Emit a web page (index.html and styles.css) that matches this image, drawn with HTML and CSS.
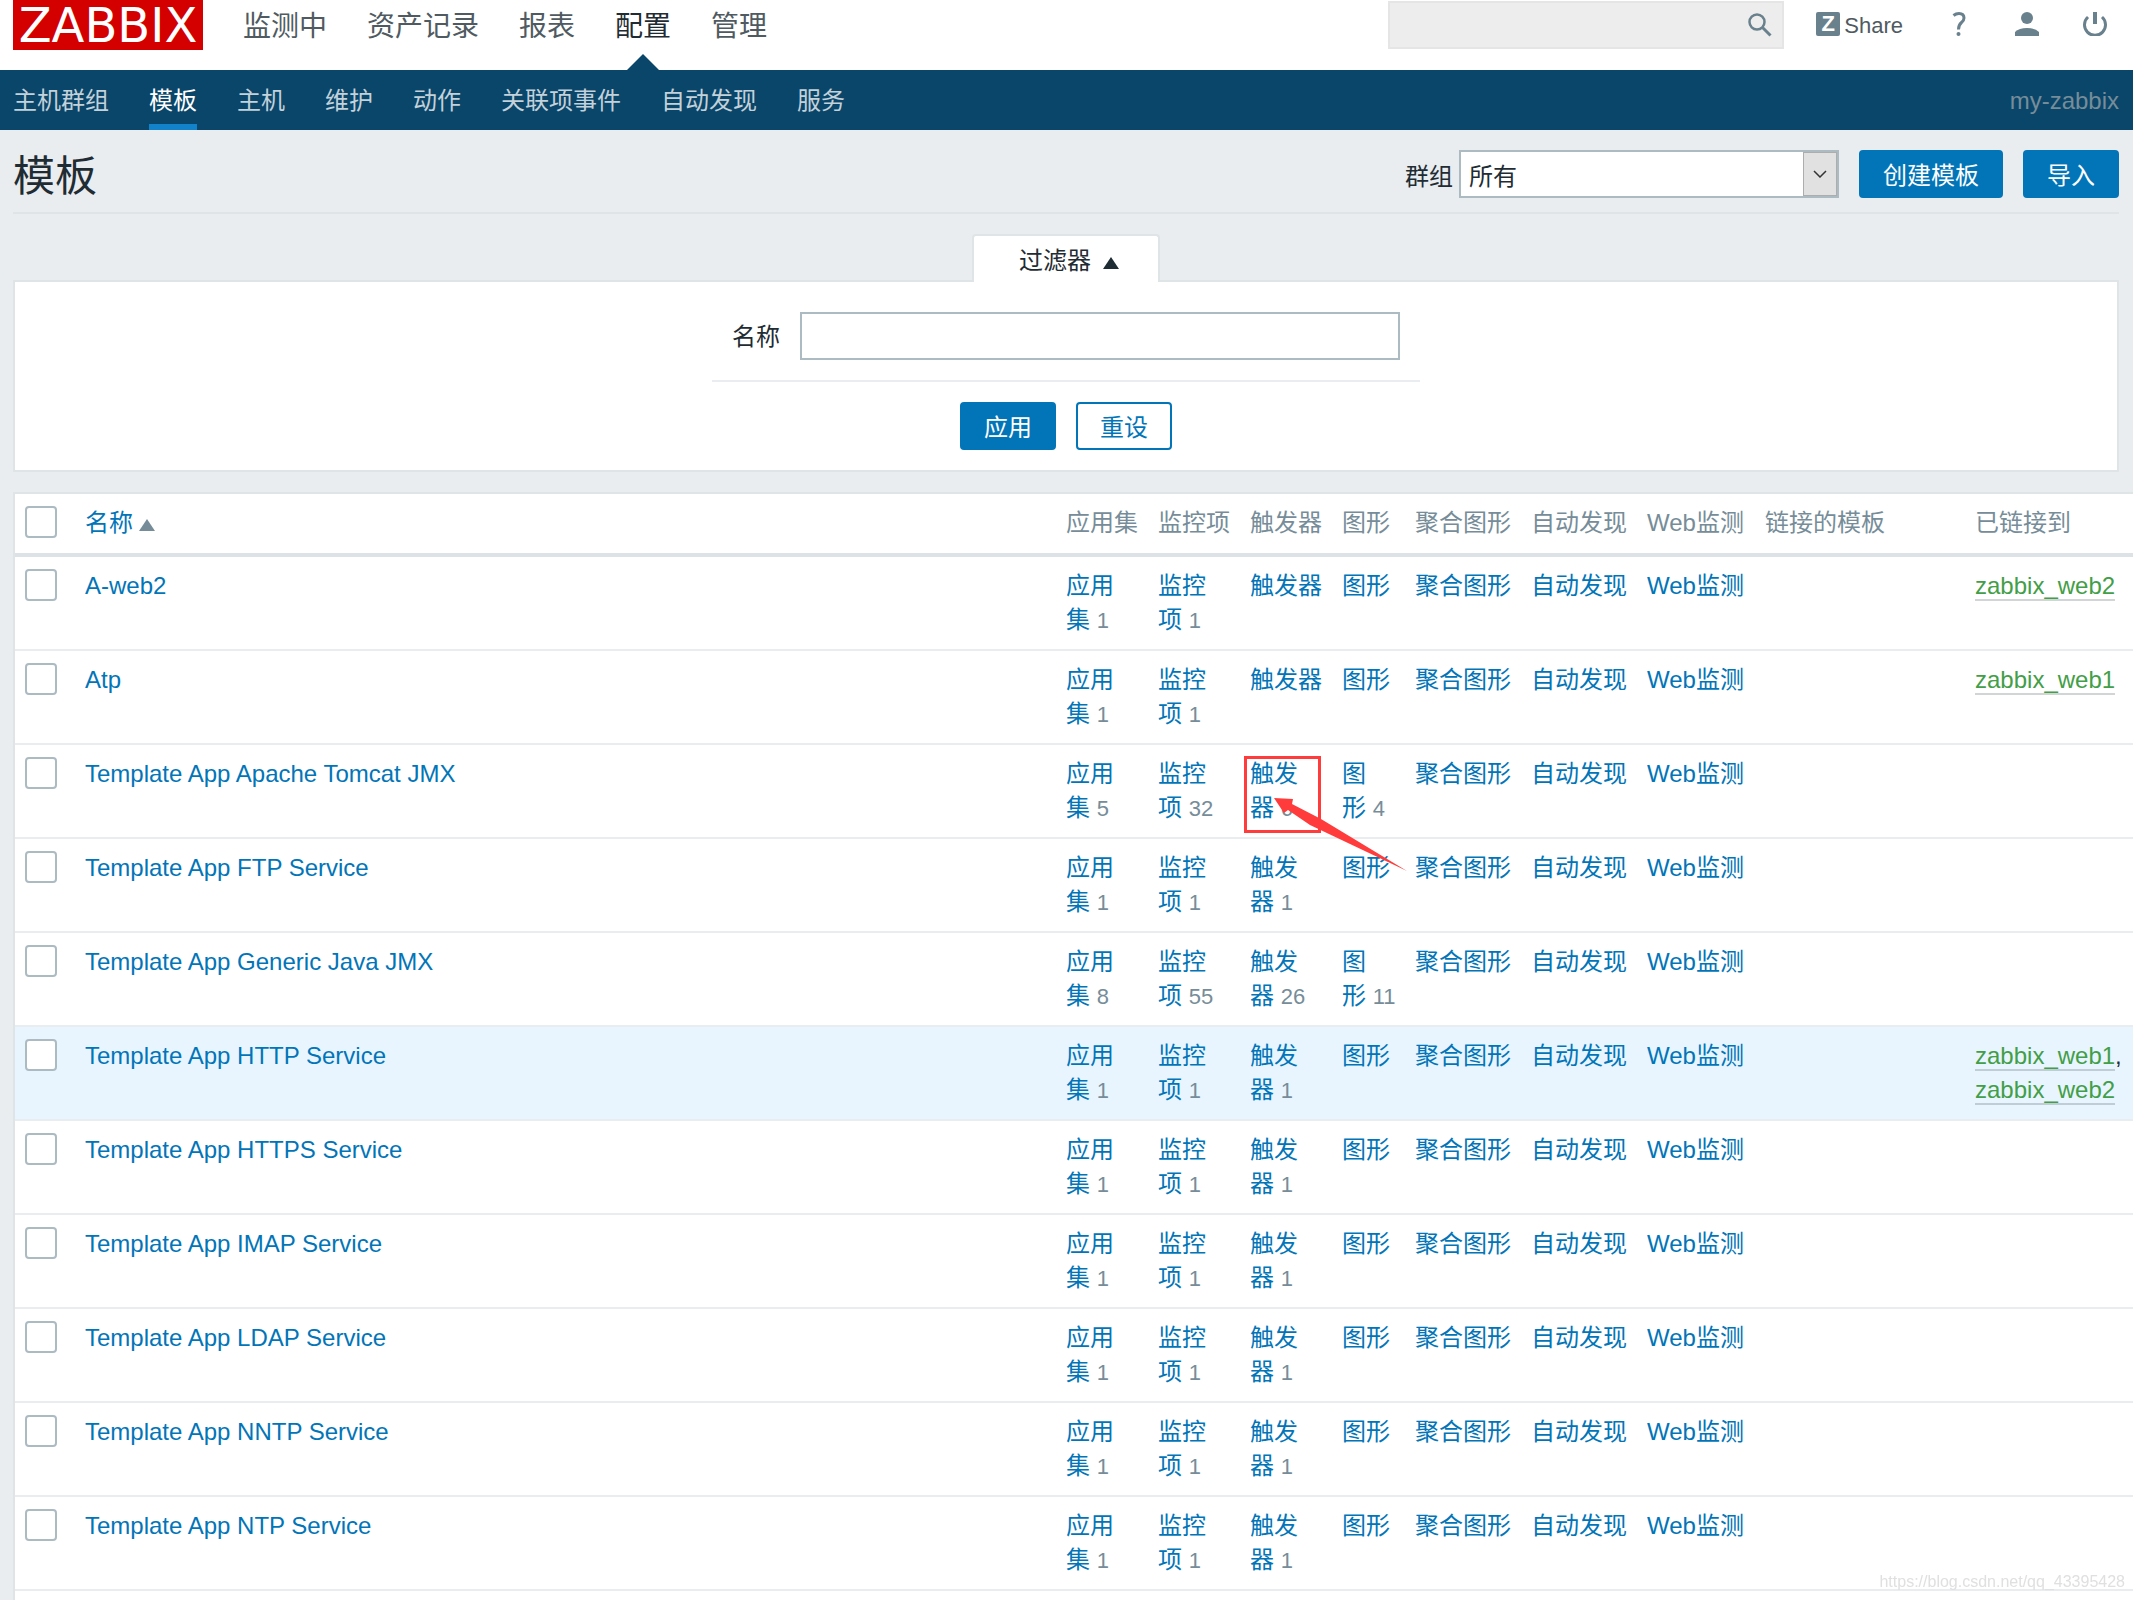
FILE: index.html
```html
<!DOCTYPE html>
<html lang="zh-CN">
<head>
<meta charset="utf-8">
<title>模板</title>
<link rel="stylesheet" href="styles.css">
</head>
<body>
<header class="top">
  <a class="logo" href="#">ZABBIX</a>
  <nav class="main-nav">
    <a href="#">监测中</a><a href="#">资产记录</a><a href="#">报表</a><a href="#" class="active">配置</a><a href="#">管理</a>
  </nav>
  <form class="search">
    <input type="text" aria-label="搜索">
    <button type="button" aria-label="搜索"><svg width="24" height="24" viewBox="0 0 24 24"><circle cx="9" cy="9" r="7.500" fill="none" stroke="#69808d" stroke-width="2.500"/><path d="M14.500 14.500l8 8" stroke="#69808d" stroke-width="3"/></svg></button>
  </form>
  <div class="tools">
    <a class="share" href="#"><span class="z">Z</span>Share</a>
    <a href="#" aria-label="帮助"><svg width="24" height="24" viewBox="0 0 24 24"><path d="M6.500 3.500Q9 1.500 12 1.500Q17 1.500 17 6Q17 8.500 14.500 10.500Q11.500 13 11.500 17.500" fill="none" stroke="#69808d" stroke-width="3"/><circle cx="11.500" cy="22" r="2" fill="#69808d"/></svg></a>
    <a href="#" aria-label="用户"><svg width="24" height="24" viewBox="0 0 24 24" fill="#69808d"><ellipse cx="12" cy="6" rx="6" ry="6"/><path d="M0 24V20Q4 16 12 16T24 20V24z"/></svg></a>
    <a href="#" aria-label="退出"><svg width="24" height="24" viewBox="0 0 24 24" fill="none" stroke="#69808d" stroke-width="3"><path d="M12 0V12" stroke-width="4"/><path d="M5 5A10.500 10.500 0 1 0 19 5"/></svg></a>
  </div>
</header>
<nav class="sub-nav">
  <a href="#">主机群组</a><a href="#" class="active">模板</a><a href="#">主机</a><a href="#">维护</a><a href="#">动作</a><a href="#">关联项事件</a><a href="#">自动发现</a><a href="#">服务</a>
  <span class="server">my-zabbix</span>
</nav>
<main>
  <div class="title-bar">
    <h1>模板</h1>
    <form class="controls">
      <label for="group">群组</label>
      <span class="select"><select id="group"><option>所有</option></select><span class="arrow"><svg width="14" height="8" viewBox="0 0 14 8"><path d="M1 1l6 6l6-6" fill="none" stroke="#333" stroke-width="1.500"/></svg></span></span>
      <button type="button" class="btn">创建模板</button>
      <button type="button" class="btn">导入</button>
    </form>
  </div>
  <section class="filter">
    <button type="button" class="tab">过滤器<span class="tri"></span></button>
    <form class="panel">
      <div class="field"><label for="name">名称</label><input type="text" id="name"></div>
      <div class="actions"><button type="button" class="btn">应用</button><button type="button" class="btn alt">重设</button></div>
    </form>
  </section>
  <div class="list-wrap">
  <table class="list">
    <colgroup><col class="c-check"><col><col class="c-count"><col class="c-count"><col class="c-count"><col class="c-graph"><col class="c-screen"><col class="c-discovery"><col class="c-web"><col class="c-linked"><col class="c-to"></colgroup>
    <thead><tr><th><input type="checkbox" aria-label="全选"></th><th><a href="#">名称<span class="tri sort"></span></a></th><th>应用集</th><th>监控项</th><th>触发器</th><th>图形</th><th>聚合图形</th><th>自动发现</th><th>Web监测</th><th>链接的模板</th><th>已链接到</th></tr></thead>
    <tbody>
      <tr><td><input type="checkbox" aria-label="A-web2"></td><td><a href="#">A-web2</a></td><td><a href="#">应用集</a>&nbsp;<sup>1</sup></td><td><a href="#">监控项</a>&nbsp;<sup>1</sup></td><td><a href="#">触发器</a></td><td><a href="#">图形</a></td><td><a href="#">聚合图形</a></td><td><a href="#">自动发现</a></td><td><a href="#">Web监测</a></td><td></td><td><a class="host" href="#">zabbix_web2</a></td></tr>
      <tr><td><input type="checkbox" aria-label="Atp"></td><td><a href="#">Atp</a></td><td><a href="#">应用集</a>&nbsp;<sup>1</sup></td><td><a href="#">监控项</a>&nbsp;<sup>1</sup></td><td><a href="#">触发器</a></td><td><a href="#">图形</a></td><td><a href="#">聚合图形</a></td><td><a href="#">自动发现</a></td><td><a href="#">Web监测</a></td><td></td><td><a class="host" href="#">zabbix_web1</a></td></tr>
      <tr><td><input type="checkbox" aria-label="Template App Apache Tomcat JMX"></td><td><a href="#">Template App Apache Tomcat JMX</a></td><td><a href="#">应用集</a>&nbsp;<sup>5</sup></td><td><a href="#">监控项</a>&nbsp;<sup>32</sup></td><td class="marked"><a href="#">触发器</a>&nbsp;<sup>6</sup><svg class="mark" width="172" height="122" viewBox="0 0 172 122"><rect x="5.500" y="1.500" width="74" height="74" fill="none" stroke="#ff3b3b" stroke-width="3"/><path d="M34 42L53 43L52 48L81 63L167 115L70 69L48 54L44 57z" fill="#ff3b3b"/></svg></td><td><a href="#">图形</a>&nbsp;<sup>4</sup></td><td><a href="#">聚合图形</a></td><td><a href="#">自动发现</a></td><td><a href="#">Web监测</a></td><td></td><td></td></tr>
      <tr><td><input type="checkbox" aria-label="Template App FTP Service"></td><td><a href="#">Template App FTP Service</a></td><td><a href="#">应用集</a>&nbsp;<sup>1</sup></td><td><a href="#">监控项</a>&nbsp;<sup>1</sup></td><td><a href="#">触发器</a>&nbsp;<sup>1</sup></td><td><a href="#">图形</a></td><td><a href="#">聚合图形</a></td><td><a href="#">自动发现</a></td><td><a href="#">Web监测</a></td><td></td><td></td></tr>
      <tr><td><input type="checkbox" aria-label="Template App Generic Java JMX"></td><td><a href="#">Template App Generic Java JMX</a></td><td><a href="#">应用集</a>&nbsp;<sup>8</sup></td><td><a href="#">监控项</a>&nbsp;<sup>55</sup></td><td><a href="#">触发器</a>&nbsp;<sup>26</sup></td><td><a href="#">图形</a>&nbsp;<sup>11</sup></td><td><a href="#">聚合图形</a></td><td><a href="#">自动发现</a></td><td><a href="#">Web监测</a></td><td></td><td></td></tr>
      <tr class="hover"><td><input type="checkbox" aria-label="Template App HTTP Service"></td><td><a href="#">Template App HTTP Service</a></td><td><a href="#">应用集</a>&nbsp;<sup>1</sup></td><td><a href="#">监控项</a>&nbsp;<sup>1</sup></td><td><a href="#">触发器</a>&nbsp;<sup>1</sup></td><td><a href="#">图形</a></td><td><a href="#">聚合图形</a></td><td><a href="#">自动发现</a></td><td><a href="#">Web监测</a></td><td></td><td><a class="host" href="#">zabbix_web1</a>, <a class="host" href="#">zabbix_web2</a></td></tr>
      <tr><td><input type="checkbox" aria-label="Template App HTTPS Service"></td><td><a href="#">Template App HTTPS Service</a></td><td><a href="#">应用集</a>&nbsp;<sup>1</sup></td><td><a href="#">监控项</a>&nbsp;<sup>1</sup></td><td><a href="#">触发器</a>&nbsp;<sup>1</sup></td><td><a href="#">图形</a></td><td><a href="#">聚合图形</a></td><td><a href="#">自动发现</a></td><td><a href="#">Web监测</a></td><td></td><td></td></tr>
      <tr><td><input type="checkbox" aria-label="Template App IMAP Service"></td><td><a href="#">Template App IMAP Service</a></td><td><a href="#">应用集</a>&nbsp;<sup>1</sup></td><td><a href="#">监控项</a>&nbsp;<sup>1</sup></td><td><a href="#">触发器</a>&nbsp;<sup>1</sup></td><td><a href="#">图形</a></td><td><a href="#">聚合图形</a></td><td><a href="#">自动发现</a></td><td><a href="#">Web监测</a></td><td></td><td></td></tr>
      <tr><td><input type="checkbox" aria-label="Template App LDAP Service"></td><td><a href="#">Template App LDAP Service</a></td><td><a href="#">应用集</a>&nbsp;<sup>1</sup></td><td><a href="#">监控项</a>&nbsp;<sup>1</sup></td><td><a href="#">触发器</a>&nbsp;<sup>1</sup></td><td><a href="#">图形</a></td><td><a href="#">聚合图形</a></td><td><a href="#">自动发现</a></td><td><a href="#">Web监测</a></td><td></td><td></td></tr>
      <tr><td><input type="checkbox" aria-label="Template App NNTP Service"></td><td><a href="#">Template App NNTP Service</a></td><td><a href="#">应用集</a>&nbsp;<sup>1</sup></td><td><a href="#">监控项</a>&nbsp;<sup>1</sup></td><td><a href="#">触发器</a>&nbsp;<sup>1</sup></td><td><a href="#">图形</a></td><td><a href="#">聚合图形</a></td><td><a href="#">自动发现</a></td><td><a href="#">Web监测</a></td><td></td><td></td></tr>
      <tr><td><input type="checkbox" aria-label="Template App NTP Service"></td><td><a href="#">Template App NTP Service</a></td><td><a href="#">应用集</a>&nbsp;<sup>1</sup></td><td><a href="#">监控项</a>&nbsp;<sup>1</sup></td><td><a href="#">触发器</a>&nbsp;<sup>1</sup></td><td><a href="#">图形</a></td><td><a href="#">聚合图形</a></td><td><a href="#">自动发现</a></td><td><a href="#">Web监测</a></td><td></td><td></td></tr>
    </tbody>
  </table>
  </div>
</main>
<div class="watermark">https://blog.csdn.net/qq_43395428</div>
</body>
</html>
```
FILE: styles.css
```css
* { box-sizing: border-box; }
html { background: #e9edf0; }
body {
  margin: 0;
  min-height: 100vh;
  display: flex;
  flex-direction: column;
  font: 24px/34px "Liberation Sans", "Noto Sans CJK SC", sans-serif;
  color: #1f2c33;
}
a { color: #0275b8; text-decoration: none; }
button, input, select { font: inherit; color: inherit; margin: 0; }
svg { display: block; }

.top {
  display: flex;
  height: 70px;
  padding: 0 14px 0 13px;
  background: #fff;
}
.logo {
  width: 190px;
  height: 50px;
  background: #d40000;
  color: #fff;
  font: 48px/50px "DejaVu Sans", sans-serif;
  text-align: center;
}
.main-nav { display: flex; gap: 40px; margin-left: 40px; }
.main-nav a { font-size: 28px; line-height: 54px; color: #4f5a61; height: 70px; }
.main-nav .active { color: #1f2c33; position: relative; }
.main-nav .active::after {
  content: "";
  position: absolute;
  left: 50%;
  bottom: 0;
  margin-left: -16px;
  border: 16px solid transparent;
  border-top: 0;
  border-bottom-color: #0a466a;
}
.search {
  display: flex;
  align-items: center;
  margin: 1px 0 0 auto;
  width: 396px;
  height: 48px;
  padding-right: 10px;
  background: #ededed;
  border: 2px solid #e5e5e5;
}
.search input { flex: 1; min-width: 0; border: 0; background: none; }
.search button { border: 0; padding: 0; background: none; }
.tools { display: flex; gap: 44px; margin: 12px 12px 0 32px; height: 24px; }
.share { display: flex; gap: 4px; font-size: 22px; line-height: 28px; color: #4f5a61; }
.z {
  width: 24px;
  height: 24px;
  border-radius: 2px;
  background: #69808d;
  color: #fff;
  font-weight: bold;
  line-height: 24px;
  text-align: center;
}

.sub-nav {
  display: flex;
  gap: 40px;
  height: 60px;
  padding: 0 14px 0 13px;
  background: #0a466a;
}
.sub-nav a { line-height: 54px; padding-top: 4px; color: #c3d1da; height: 60px; border-bottom: 6px solid transparent; }
.sub-nav .active { color: #fff; border-color: #1283cb; }
.server { margin-left: auto; line-height: 62px; color: #768d99; }

main { display: flex; flex-direction: column; flex: 1; padding-left: 13px; }
.title-bar {
  display: flex;
  justify-content: space-between;
  align-items: center;
  height: 84px;
  margin-right: 14px;
  padding-top: 6px;
  border-bottom: 2px solid #dfe4e7;
}
h1 { margin: 0; padding-top: 6px; font-size: 42px; font-weight: normal; line-height: 60px; }
.controls { display: flex; align-items: center; }
.controls label { padding-top: 6px; }
.select { position: relative; width: 380px; margin-left: 6px; }
.select select {
  display: block;
  width: 100%;
  height: 48px;
  padding: 6px 8px 0;
  appearance: none;
  background: #fff;
  border: 2px solid #acbbc2;
  border-radius: 0;
}
.arrow {
  position: absolute;
  top: 2px;
  right: 2px;
  width: 34px;
  height: 44px;
  display: flex;
  align-items: center;
  justify-content: center;
  background: #e1e1e1;
  border: 1px solid #adadad;
  pointer-events: none;
}
.btn {
  height: 48px;
  padding: 4px 22px 0;
  border: 2px solid #0275b8;
  border-radius: 4px;
  background: #0275b8;
  color: #fff;
}
.controls .btn { margin-left: 20px; }
.alt { background: #fff; color: #0275b8; }

.filter { margin: 20px 14px 20px 0; }
.tab {
  display: block;
  position: relative;
  width: 188px;
  height: 48px;
  margin: 0 auto -2px;
  padding: 4px 0 0 6px;
  background: #fff;
  border: 2px solid #dfe4e7;
  border-bottom: 0;
  border-radius: 4px 4px 0 0;
}
.tri {
  display: inline-block;
  margin-left: 12px;
  border: 8px solid transparent;
  border-top: 0;
  border-bottom: 12px solid #1f2c33;
}
.sort { margin-left: 6px; border-bottom-color: #768d99; }
.panel {
  display: flex;
  flex-direction: column;
  align-items: center;
  padding: 30px 0 20px;
  background: #fff;
  border: 2px solid #dfe4e7;
}
.field {
  display: flex;
  align-items: center;
  gap: 20px;
  padding: 0 20px 20px;
  border-bottom: 2px solid #e9edf0;
}
.field label { padding-top: 2px; }
.field input { width: 600px; height: 48px; border: 2px solid #acbbc2; background: #fff; }
.actions { display: flex; gap: 20px; padding-top: 20px; }

.list-wrap {
  flex: 1;
  background: #fff;
  border: 2px solid #dfe4e7;
  border-width: 2px 0 0 2px;
}
.list {
  width: 100%;
  table-layout: fixed;
  border-spacing: 0;
}
.c-check { width: 60px; }
.c-count { width: 92px; }
.c-graph { width: 73px; }
.c-screen { width: 116px; }
.c-discovery { width: 116px; }
.c-web { width: 118px; }
.c-linked { width: 210px; }
.c-to { width: 168px; }
th, td {
  padding: 12px 10px;
  text-align: left;
  vertical-align: top;
  font-weight: normal;
  border-bottom: 2px solid #e9edf0;
}
td { height: 94px; }
th { color: #768d99; border-bottom: 4px solid #dce2e5; white-space: nowrap; }
thead th { height: 63px; }
sup { font-size: 22px; line-height: 30px; vertical-align: baseline; color: #768d99; }
.list input {
  display: block;
  appearance: none;
  width: 32px;
  height: 32px;
  border: 2px solid #acbbc2;
  border-radius: 4px;
  background: #fff;
}
.host { color: #429e47; border-bottom: 2px solid rgba(31, 44, 51, 0.2); }
.hover td { background: #e8f5ff; }
.marked { position: relative; }
.mark { position: absolute; left: 0; top: 11px; z-index: 1; pointer-events: none; }
.watermark {
  position: fixed;
  right: 8px;
  bottom: 6px;
  font-size: 16px;
  line-height: 24px;
  color: #e0e0e0;
}
```
